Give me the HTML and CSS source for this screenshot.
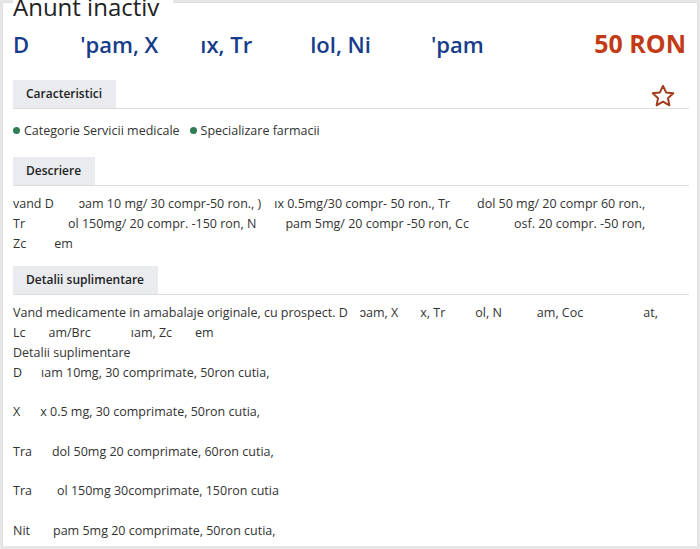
FILE: index.html
```html
<!DOCTYPE html>
<html lang="ro">
<head>
    <meta charset="UTF-8">
    <meta name="viewport" content="width=device-width, initial-scale=1.0">
    <title>Anunt inactiv</title>
    <link rel="stylesheet" href="styles.css">
</head>
<body>
    <div class="listing">
        <h1 class="status">Anunt inactiv</h1>

        <div class="headline">
            <h2 class="title">D<span class="gap g51"></span>'pam, X<span class="gap g42"></span>ıx, Tr<span class="gap g58"></span>lol, Ni<span class="gap g60"></span>'pam</h2>
            <div class="price">50 RON</div>
        </div>

        <div class="section">
            <div class="section-head">
                <span class="tab">Caracteristici</span>
                <svg class="star" viewBox="0 0 24 24" width="26" height="26">
                    <path d="M12 2.6l2.85 6.1 6.65.75-4.95 4.55 1.35 6.6L12 17.25 6.1 20.6l1.35-6.6L2.5 9.45l6.65-.75z" fill="none" stroke="#a13a1c" stroke-width="1.8" stroke-linejoin="round"/>
                </svg>
            </div>
            <ul class="tags">
                <li><span class="dot"></span>Categorie Servicii medicale</li>
                <li><span class="dot"></span>Specializare farmacii</li>
            </ul>
        </div>

        <div class="section section-tight">
            <div class="section-head">
                <span class="tab">Descriere</span>
            </div>
            <p class="text">
                vand D<span class="gap g25"></span>ɔam 10 mg/ 30 compr-50 ron., )<span class="gap g13"></span>ıx 0.5mg/30 compr- 50 ron., Tr<span class="gap g27"></span>dol 50 mg/ 20 compr 60 ron.,<br>
                Tr<span class="gap g43"></span>ol 150mg/ 20 compr. -150 ron, N<span class="gap g29"></span>pam 5mg/ 20 compr -50 ron, Cc<span class="gap g45"></span>osf. 20 compr. -50 ron,<br>
                Zc<span class="gap g28"></span>em
            </p>
        </div>

        <div class="section section-close">
            <div class="section-head">
                <span class="tab">Detalii suplimentare</span>
            </div>
            <p class="text">
                Vand medicamente in amabalaje originale, cu prospect. D<span class="gap g12"></span>ɔam, X<span class="gap g22"></span>x, Tr<span class="gap g30"></span>ol, N<span class="gap g35"></span>am, Coc<span class="gap g60"></span>at,<br>
                Lc<span class="gap g23"></span>am/Brc<span class="gap g40"></span>ıam, Zc<span class="gap g23"></span>em<br>
                Detalii suplimentare<br>
                D<span class="gap g19"></span>ıam 10mg, 30 comprimate, 50ron cutia,<br>
                <br>
                X<span class="gap g20"></span>x 0.5 mg, 30 comprimate, 50ron cutia,<br>
                <br>
                Tra<span class="gap g20"></span>dol 50mg 20 comprimate, 60ron cutia,<br>
                <br>
                Tra<span class="gap g25"></span>ol 150mg 30comprimate, 150ron cutia<br>
                <br>
                Nit<span class="gap g23"></span>pam 5mg 20 comprimate, 50ron cutia,
            </p>
        </div>
    </div>
</body>
</html>
```

FILE: styles.css
```css
body {
    margin: 0;
    font-family: 'Segoe UI', 'Open Sans', sans-serif;
    color: #333;
    background-color: #e6e6e6;
    height: 549px;
    overflow: hidden;
}

.listing {
    background-color: white;
    margin: 2px 2px 0 2px;
    border: 1px solid #e0e0e0;
    border-bottom: none;
    padding: 0 8px 0 10px;
    height: 543px;
}

.status {
    width: fit-content;
    margin: -11px 0 0 0;
    padding-right: 14px;
    background-color: white;
    font-size: 24px;
    font-weight: 400;
    line-height: 30px;
    color: #222;
    position: relative;
}

.headline {
    display: flex;
    justify-content: space-between;
    align-items: baseline;
    margin-top: 7px;
    padding-right: 3px;
}

.title {
    margin: 0;
    font-size: 22px;
    font-weight: 600;
    line-height: 28px;
    color: #163c8a;
}

.price {
    font-size: 25px;
    font-weight: 700;
    line-height: 28px;
    color: #c23a16;
}

.gap {
    display: inline-block;
}

.g12 { width: 12px; }
.g13 { width: 13px; }
.g19 { width: 19px; }
.g20 { width: 20px; }
.g22 { width: 22px; }
.g23 { width: 23px; }
.g25 { width: 25px; }
.g27 { width: 27px; }
.g28 { width: 28px; }
.g29 { width: 29px; }
.g30 { width: 30px; }
.g35 { width: 35px; }
.g40 { width: 40px; }
.g42 { width: 42px; }
.g43 { width: 43px; }
.g45 { width: 45px; }
.g51 { width: 51px; }
.g58 { width: 58px; }
.g60 { width: 60px; }

.section {
    margin-top: 22px;
}

.section-tight {
    margin-top: 17px;
}

.section-close {
    margin-top: 13px;
}

.section-head {
    position: relative;
    border-bottom: 1px solid #dcdcdc;
}

.tab {
    display: inline-block;
    vertical-align: top;
    background-color: #e9ebee;
    padding: 0 14px 0 13px;
    font-size: 12px;
    font-weight: 600;
    line-height: 28px;
    color: #222;
}

.star {
    position: absolute;
    right: 13px;
    bottom: -1px;
}

.tags {
    display: flex;
    gap: 10px;
    list-style: none;
    margin: 12px 0 0 0;
    padding: 0;
    font-size: 12.5px;
    line-height: 19px;
}

.tags li {
    display: flex;
    align-items: center;
}

.dot {
    width: 7px;
    height: 7px;
    border-radius: 50%;
    background-color: #2e7d55;
    margin-right: 4px;
}

.text {
    margin: 8px 0 0 0;
    font-size: 12.5px;
    line-height: 19.75px;
    white-space: nowrap;
}
```
